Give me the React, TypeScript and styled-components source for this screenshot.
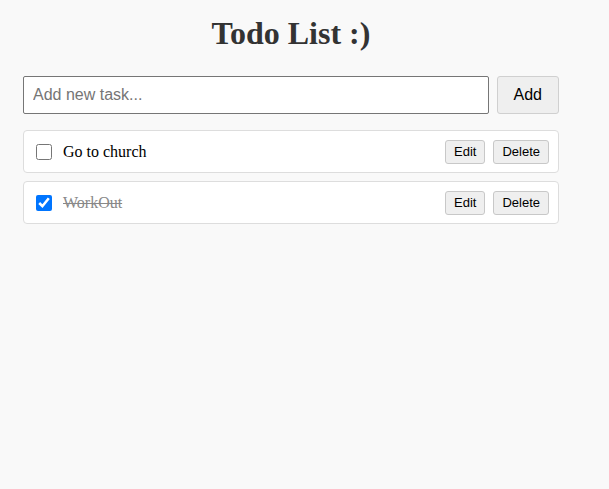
import React, { useState } from "react";
import styled, { createGlobalStyle } from "styled-components";

const GlobalStyle = createGlobalStyle`
  html, body {
    margin: 0;
    padding: 0;
    background: #f9f9f9;
  }
  body {
    font-family: "Liberation Serif", "Times New Roman", serif;
  }
`;

const Container = styled.div`
  width: 536px;
  padding: 15px 0 0 23px;
  display: flex;
  flex-direction: column;
`;

const Title = styled.h1`
  margin: 0 0 24px;
  font-family: "Liberation Serif", "Times New Roman", serif;
  font-size: 32px;
  font-weight: bold;
  color: #333;
  text-align: center;
  line-height: 37px;
`;

const InputRow = styled.div`
  display: flex;
  gap: 8px;
  margin-bottom: 16px;
`;

const TaskInput = styled.input`
  flex: 1;
  height: 38px;
  box-sizing: border-box;
  padding: 0 9px;
  border: 1px solid #767676;
  border-radius: 2px;
  background: #fff;
  font-family: "Liberation Sans", Arial, sans-serif;
  font-size: 16px;
  color: #000;
  outline: none;
  &::placeholder {
    color: #757575;
  }
`;

const Button = styled.button<{ $big?: boolean }>`
  box-sizing: border-box;
  height: ${(p) => (p.$big ? "38px" : "24px")};
  padding: ${(p) => (p.$big ? "0 16px" : "0 8px")};
  border: 1px solid ${(p) => (p.$big ? "#d0d0d0" : "#c8c8c8")};
  border-radius: 3px;
  background: #efefef;
  font-family: "Liberation Sans", Arial, sans-serif;
  font-size: ${(p) => (p.$big ? "16px" : "13px")};
  color: #000;
  cursor: pointer;
`;

const List = styled.ul`
  list-style: none;
  margin: 0;
  padding: 0;
  display: flex;
  flex-direction: column;
  gap: 8px;
`;

const Item = styled.li`
  box-sizing: border-box;
  height: 43px;
  display: flex;
  align-items: center;
  padding: 0 9px 0 12px;
  background: #fff;
  border: 1px solid #ddd;
  border-radius: 4px;
`;

const Check = styled.input`
  width: 16px;
  height: 16px;
  margin: 0 11px 0 0;
`;

const Label = styled.span<{ $done?: boolean }>`
  flex: 1;
  font-family: "Liberation Serif", "Times New Roman", serif;
  font-size: 16px;
  color: ${(p) => (p.$done ? "#888" : "#000")};
  text-decoration: ${(p) => (p.$done ? "line-through" : "none")};
`;

const Actions = styled.div`
  display: flex;
  gap: 8px;
`;

export default function App() {
  const [todos, setTodos] = useState([
    { id: 1, text: "Go to church", done: false },
    { id: 2, text: "WorkOut", done: true },
  ]);
  return (
    <>
      <GlobalStyle />
      <Container>
        <Title>Todo List :)</Title>
        <InputRow>
          <TaskInput placeholder="Add new task..." />
          <Button $big>Add</Button>
        </InputRow>
        <List>
          {todos.map((t) => (
            <Item key={t.id}>
              <Check
                type="checkbox"
                checked={t.done}
                onChange={() =>
                  setTodos((ts) =>
                    ts.map((x) => (x.id === t.id ? { ...x, done: !x.done } : x))
                  )
                }
              />
              <Label $done={t.done}>{t.text}</Label>
              <Actions>
                <Button>Edit</Button>
                <Button>Delete</Button>
              </Actions>
            </Item>
          ))}
        </List>
      </Container>
    </>
  );
}
